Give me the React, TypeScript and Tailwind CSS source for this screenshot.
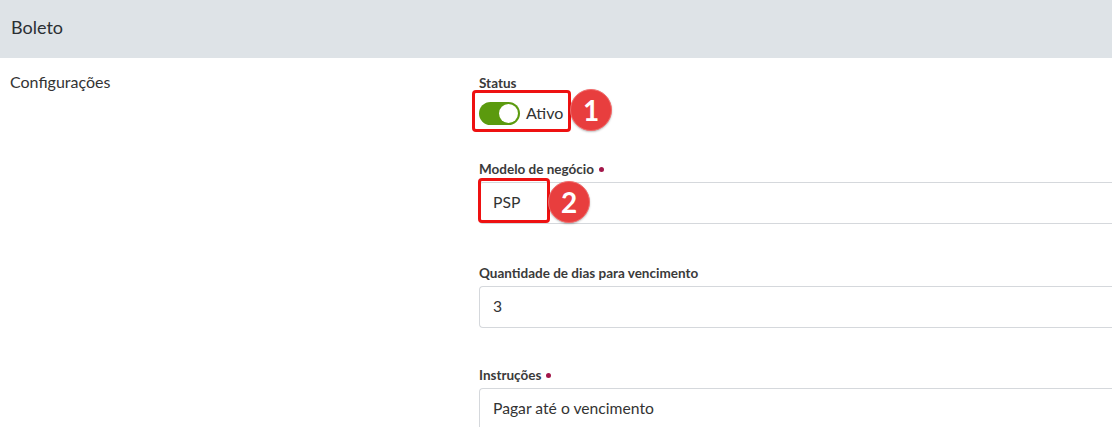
import React from 'react'

function Badge({ n }: { n: string }) {
  return (
    <span className="flex items-center justify-center w-[42px] h-[42px] rounded-full bg-[#e83e3e] border border-[#f26a6a] text-white text-[28px] font-bold leading-none shadow-[0_1px_2px_rgba(0,0,0,0.25)]">
      {n}
    </span>
  )
}

function Label({ text, required }: { text: string; required?: boolean }) {
  return (
    <div className="flex items-center gap-[5px] text-[13.5px] font-bold text-[#3a3a3a] leading-[18px] mb-[4px]">
      {text}
      {required && <span className="w-[5px] h-[5px] rounded-full bg-[#a3174a]"></span>}
    </div>
  )
}

function Input({ value }: { value: string }) {
  return (
    <div className="h-[42px] border border-r-0 border-[#d5d8dc] rounded-l-[4px] flex items-center pl-[13px] text-[15.7px] text-[#333]">
      {value}
    </div>
  )
}

export default function App() {
  return (
    <div className="w-[1112px] h-[427px] overflow-hidden bg-white font-['Lato','Open_Sans',sans-serif]">
      {/* header */}
      <div className="h-[58px] bg-[#dee3e7] flex items-center pl-[11px] pb-[3px] text-[18px] text-[#2b2f33]">
        Boleto
      </div>

      <div className="flex pt-[15px]">
        <div className="w-[479px] pl-[10px] text-[16px] text-[#333] leading-[18px]">Configurações</div>

        <div className="flex-1 flex flex-col pt-[1px]">
          {/* Status */}
          <div className="relative">
            <div className="text-[13.5px] font-bold text-[#3a3a3a] leading-[18px]">Status</div>
            <div className="flex items-center gap-[6px] h-[38px] mt-[2px]">
              <span className="relative w-[41px] h-[23px] rounded-full bg-[#5b9a0e]">
                <span className="absolute right-[2px] top-[2px] w-[19px] h-[19px] rounded-full bg-white"></span>
              </span>
              <span className="text-[16px] text-[#333]">Ativo</span>
            </div>
            {/* annotation 1 */}
            <div className="absolute left-[-7px] top-[16px] w-[99px] h-[42px] border-[3px] border-[#ee1111] rounded-[4px]"></div>
            <div className="absolute left-[91px] top-[15px]">
              <Badge n="1" />
            </div>
          </div>

          {/* Modelo de negócio */}
          <div className="relative mt-[28px]">
            <Label text="Modelo de negócio" required />
            <Input value="PSP" />
            <div className="absolute left-[-1px] top-[18px] w-[72px] h-[45px] border-[3px] border-[#ee1111] rounded-[4px]"></div>
            <div className="absolute left-[69px] top-[21px]">
              <Badge n="2" />
            </div>
          </div>

          {/* Quantidade */}
          <div className="mt-[40px]">
            <Label text="Quantidade de dias para vencimento" />
            <Input value="3" />
          </div>

          {/* Instruções */}
          <div className="mt-[38px]">
            <Label text="Instruções" required />
            <Input value="Pagar até o vencimento" />
          </div>
        </div>
      </div>
    </div>
  )
}
